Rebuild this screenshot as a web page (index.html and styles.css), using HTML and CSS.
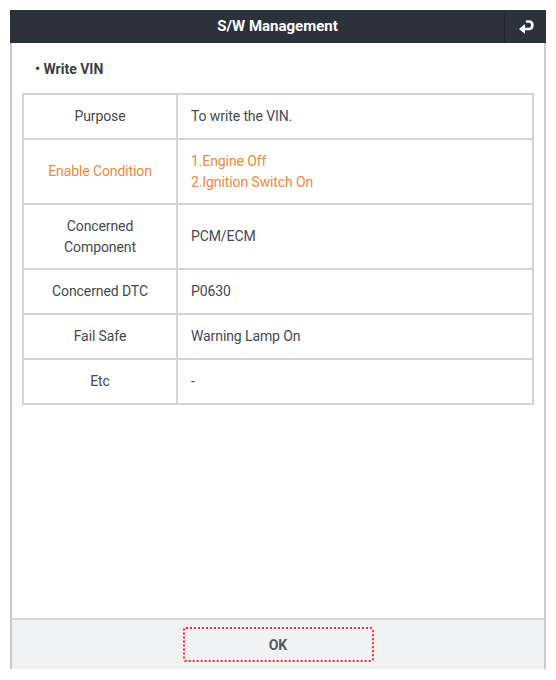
FILE: index.html
```html
<!DOCTYPE html>
<html>
<head>
<meta charset="utf-8">
<link rel="stylesheet" href="styles.css">
</head>
<body>
<div class="frame">
  <div class="header">
    <div class="title">S/W Management</div>
    <div class="back">
      <svg width="18" height="16" viewBox="0 0 18 16">
        <path d="M10 2.5 H12 C16.5 2.5 16.5 10 12 10 H7" fill="none" stroke="#fff" stroke-width="2.6" stroke-linecap="round"/>
        <path d="M2 10 L8 5 L8 15 Z" fill="#fff"/>
      </svg>
    </div>
  </div>
  <div class="content">
    <div class="heading">• Write VIN</div>
    <table class="info">
      <tr class="r45"><td class="k">Purpose</td><td class="v">To write the VIN.</td></tr>
      <tr class="r65 orange"><td class="k">Enable Condition</td><td class="v">1.Engine Off<br>2.Ignition Switch On</td></tr>
      <tr class="r65"><td class="k">Concerned<br>Component</td><td class="v">PCM/ECM</td></tr>
      <tr class="r45"><td class="k">Concerned DTC</td><td class="v">P0630</td></tr>
      <tr class="r45"><td class="k">Fail Safe</td><td class="v">Warning Lamp On</td></tr>
      <tr class="r45"><td class="k">Etc</td><td class="v">-</td></tr>
    </table>
  </div>
  <div class="footer">
    <div class="ok">OK</div>
  </div>
</div>
</body>
</html>
```
FILE: styles.css
```css
html, body {
  margin: 0;
  padding: 0;
  background: #fff;
}
body {
  font-family: Roboto, "Liberation Sans", sans-serif;
  color: #444a52;
}
.frame {
  margin: 10px 0 0 10px;
  width: 536px;
  height: 659px;
  display: flex;
  flex-direction: column;
  box-sizing: border-box;
  border-left: 2px solid #c9c9c9;
  border-right: 2px solid #c9c9c9;
}
.header {
  height: 33px;
  background: #2c323c;
  display: flex;
  margin: 0 -2px;
}
.title {
  flex: 1;
  color: #fff;
  font-weight: 700;
  font-size: 15px;
  line-height: 33px;
  text-align: center;
  padding-left: 41px;
}
.back {
  width: 41px;
  border-left: 1px solid #21262d;
  display: flex;
  align-items: center;
  justify-content: center;
}
.content {
  flex: 1;
  padding: 18px 10px 0 10px;
}
.heading {
  font-size: 14px;
  font-weight: 700;
  line-height: 16px;
  padding-left: 13px;
  color: #3a3f46;
  margin-bottom: 16px;
}
.info {
  width: 100%;
  border-collapse: collapse;
  border: 2px solid #c6c6c6;
  font-size: 14px;
  letter-spacing: -0.1px;
}
.info td {
  border: 2px solid #d4d4d4;
  padding: 0;
  line-height: 21px;
}
.info .k {
  width: 152px;
  text-align: center;
}
.info .v {
  padding-left: 13px;
}
.r45 { height: 45px; }
.r65 { height: 65px; }
.orange { color: #ee8a3c; }
.footer {
  height: 51px;
  box-sizing: border-box;
  background: #f1f2f4;
  border-top: 2px solid #d6d6d6;
  display: flex;
  justify-content: center;
  padding-top: 7px;
}
.ok {
  width: 191px;
  height: 35px;
  box-sizing: border-box;
  border: 2px dotted #ff2a2a;
  border-radius: 3px;
  display: flex;
  align-items: center;
  justify-content: center;
  font-size: 14px;
  font-weight: 700;
  color: #555a60;
}
```
